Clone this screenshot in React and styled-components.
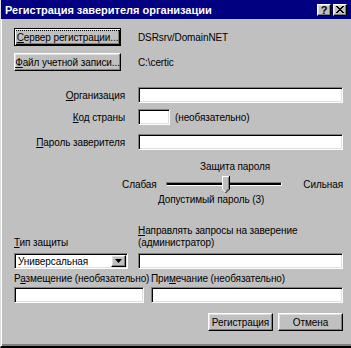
import React from 'react';
import styled, { createGlobalStyle } from 'styled-components';

const GlobalStyle = createGlobalStyle`
  html, body {
    margin: 0;
    padding: 0;
    background: #c0c0c0;
  }
  body {
    font-family: "Liberation Sans", Arial, sans-serif;
    font-size: 10px;
    letter-spacing: -0.1px;
    color: #000;
  }
`;

const Window = styled.div`
  width: 351px;
  height: 348px;
  box-sizing: border-box;
  background: #c0c0c0;
  display: flex;
  flex-direction: column;
  border-left: 1px solid #dfdfdf;
  border-bottom: 2px solid #000;
  box-shadow: inset 1px 0 #fff, inset 0 -2px #808080;
  overflow: hidden;
`;

const TitleBar = styled.div`
  height: 19px;
  flex-shrink: 0;
  margin-left: -1px;
  background: #000080;
  color: #fff;
  display: flex;
  align-items: center;
  justify-content: space-between;
  padding: 0 4px 0 5px;
  font-weight: bold;
  font-size: 11px;
  letter-spacing: 0;
`;

const TitleButtons = styled.div`
  display: flex;
  gap: 2px;
`;

const raised = `
  background: #c0c0c0;
  border: 1px solid;
  border-color: #fff #000 #000 #fff;
  box-shadow: inset -1px -1px #808080, inset 1px 1px #dfdfdf;
`;

const TitleButton = styled.div`
  ${raised}
  width: 14px;
  height: 12px;
  box-sizing: border-box;
  display: flex;
  align-items: center;
  justify-content: center;
  color: #000;
  font-size: 11px;
  font-weight: bold;
`;

const Body = styled.div`
  padding: 9px 8px 0 13px;
  display: flex;
  flex-direction: column;
`;

const ButtonRow = styled.div`
  display: flex;
  align-items: center;
  gap: 17px;
  margin-top: ${(p) => p.$gap || 0}px;
`;

const Button = styled.div`
  ${raised}
  width: ${(p) => p.$w}px;
  height: 18px;
  box-sizing: border-box;
  display: flex;
  align-items: center;
  justify-content: center;
  white-space: nowrap;
  ${(p) =>
    p.$default &&
    `
    border-color: #000;
    box-shadow: inset 1px 1px #fff, inset -1px -1px #000, inset -2px -2px #808080;
  `}
`;

const FocusText = styled.span`
  outline: 1px dotted #000;
  outline-offset: 1px;
  padding: 0 1px;
`;

const Value = styled.span`
  white-space: nowrap;
`;

const FieldRow = styled.div`
  display: grid;
  grid-template-columns: 111px auto 1fr;
  column-gap: 13px;
  align-items: center;
  margin-top: ${(p) => p.$gap}px;
`;

const Label = styled.label`
  text-align: right;
  white-space: nowrap;
`;

const Input = styled.div`
  height: 16px;
  box-sizing: border-box;
  width: ${(p) => (p.$w ? `${p.$w}px` : '100%')};
  background: #fff;
  border: 1px solid;
  border-color: #808080 #fff #fff #808080;
  box-shadow: inset 1px 1px #000, inset -1px -1px #dfdfdf;
  grid-column: ${(p) => (p.$span ? '2 / 4' : 'auto')};
`;

const Hint = styled.span`
  margin-left: 5px;
  white-space: nowrap;
`;

const InlineField = styled.div`
  display: flex;
  align-items: center;
`;

const SliderBlock = styled.div`
  margin-top: 10px;
  display: flex;
  flex-direction: column;
`;

const SliderTitle = styled.div`
  margin-left: ${(p) => p.$left}px;
  line-height: 13px;
`;

const SliderRow = styled.div`
  display: flex;
  align-items: center;
  height: 18px;
  margin-top: 2px;
  padding-left: 105px;
`;

const SideLabel = styled.span`
  width: 38px;
  text-align: right;
  white-space: nowrap;
`;

const Track = styled.div`
  position: relative;
  width: 118px;
  height: 4px;
  box-sizing: border-box;
  margin: 0 21px 0 9px;
  background: #000;
  border: 1px solid;
  border-color: #808080 #fff #fff #808080;
`;

const Thumb = styled.svg`
  position: absolute;
  left: 55px;
  top: -7px;
`;

const TwoCol = styled.div`
  display: grid;
  grid-template-columns: ${(p) => p.$cols};
  column-gap: ${(p) => p.$gapX}px;
  row-gap: ${(p) => p.$gapY}px;
  margin-top: ${(p) => p.$top}px;
  align-items: end;
`;

const TopLabel = styled.div`
  line-height: 12px;
  white-space: nowrap;
`;

const Select = styled.div`
  height: 16px;
  box-sizing: border-box;
  background: #fff;
  border: 1px solid;
  border-color: #808080 #fff #fff #808080;
  box-shadow: inset 1px 1px #000, inset -1px -1px #dfdfdf;
  display: flex;
  align-items: center;
  justify-content: space-between;
  padding: 1px 1px 1px 3px;
`;

const DropButton = styled.div`
  ${raised}
  width: 15px;
  height: 12px;
  box-sizing: border-box;
  display: flex;
  align-items: center;
  justify-content: center;
`;

const Footer = styled.div`
  display: flex;
  justify-content: flex-end;
  gap: 5px;
  margin-top: 10px;
`;

const ThumbIcon = () => (
  <Thumb width="8" height="17" viewBox="0 0 8 17">
    <path d="M0 0h8v13l-4 4l-4 -4z" fill="#c0c0c0" />
    <path d="M0.5 13V0.5H7" stroke="#fff" fill="none" />
    <path d="M7.5 0v13l-4 4" stroke="#000" fill="none" />
    <path d="M6.5 1v11.5l-3 3" stroke="#808080" fill="none" />
    <path d="M0.5 13l3 3" stroke="#fff" fill="none" />
  </Thumb>
);

const CloseIcon = () => (
  <svg width="8" height="7" viewBox="0 0 8 7">
    <path d="M0 0l7 7M1 0l7 7M7 0l-7 7M8 0l-7 7" stroke="#000" strokeWidth="1" />
  </svg>
);

const ArrowIcon = () => (
  <svg width="7" height="4" viewBox="0 0 7 4">
    <path d="M0 0h7l-3.5 4z" fill="#000" />
  </svg>
);

export default function App() {
  return (
    <>
      <GlobalStyle />
      <Window>
        <TitleBar>
          <span>Регистрация заверителя организации</span>
          <TitleButtons>
            <TitleButton>?</TitleButton>
            <TitleButton>
              <CloseIcon />
            </TitleButton>
          </TitleButtons>
        </TitleBar>
        <Body>
          <ButtonRow>
            <Button $w={107} $default>
              <FocusText>
                <u>С</u>ервер регистрации...
              </FocusText>
            </Button>
            <Value>DSRsrv/DomainNET</Value>
          </ButtonRow>
          <ButtonRow $gap={7}>
            <Button $w={107}>
              <span>
                <u>Ф</u>айл учетной записи...
              </span>
            </Button>
            <Value>C:\certic</Value>
          </ButtonRow>

          <FieldRow $gap={16}>
            <Label>
              <u>О</u>рганизация
            </Label>
            <Input $span />
          </FieldRow>
          <FieldRow $gap={6}>
            <Label>
              <u>К</u>од страны
            </Label>
            <InlineField>
              <Input $w={32} />
              <Hint>(необязательно)</Hint>
            </InlineField>
          </FieldRow>
          <FieldRow $gap={9}>
            <Label>
              <u>П</u>ароль заверителя
            </Label>
            <Input $span />
          </FieldRow>

          <SliderBlock>
            <SliderTitle $left={186}>Защита пароля</SliderTitle>
            <SliderRow>
              <SideLabel>Слабая</SideLabel>
              <Track>
                <ThumbIcon />
              </Track>
              <span>Сильная</span>
            </SliderRow>
            <SliderTitle $left={144}>Допустимый пароль (3)</SliderTitle>
          </SliderBlock>

          <TwoCol $cols="114px 205px" $gapX={10} $gapY={4} $top={19}>
            <TopLabel>
              <u>Т</u>ип защиты
            </TopLabel>
            <TopLabel>
              <u>Н</u>аправлять запросы на заверение
              <br />
              (администратор)
            </TopLabel>
            <Select>
              <span>Универсальная</span>
              <DropButton>
                <ArrowIcon />
              </DropButton>
            </Select>
            <Input />
          </TwoCol>

          <TwoCol $cols="130px 192px" $gapX={7} $gapY={2} $top={4}>
            <TopLabel>
              Р<u>а</u>змещение (необязательно)
            </TopLabel>
            <TopLabel>
              При<u>м</u>ечание (необязательно)
            </TopLabel>
            <Input />
            <Input />
          </TwoCol>

          <Footer>
            <Button $w={65}>Регистрация</Button>
            <Button $w={65}>Отмена</Button>
          </Footer>
        </Body>
      </Window>
    </>
  );
}
